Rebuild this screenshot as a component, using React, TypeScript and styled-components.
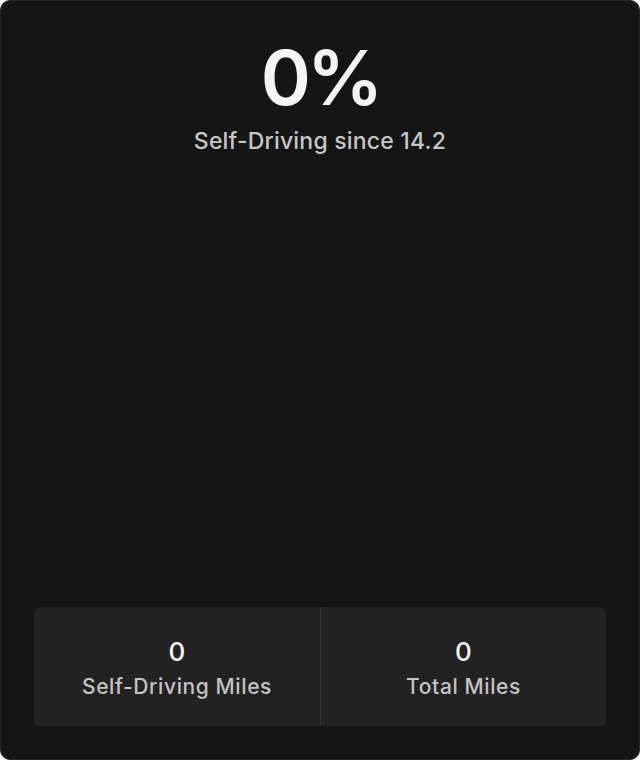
import React from "react";
import styled, { createGlobalStyle } from "styled-components";

const stats = [
  { value: "0", label: "Self-Driving Miles" },
  { value: "0", label: "Total Miles" },
];

const App: React.FC = () => {
  return (
    <Card>
      <GlobalStyle />
      <Header>
        <Percent>0%</Percent>
        <Subtitle>Self-Driving since 14.2</Subtitle>
      </Header>
      <StatsPanel>
        {stats.map((s, i) => (
          <Stat key={s.label} $divider={i > 0}>
            <StatValue>{s.value}</StatValue>
            <StatLabel>{s.label}</StatLabel>
          </Stat>
        ))}
      </StatsPanel>
    </Card>
  );
};

const GlobalStyle = createGlobalStyle`
  html, body {
    margin: 0;
    padding: 0;
    background: #ffffff;
  }
  body {
    font-family: Inter, "Noto Sans", sans-serif;
    -webkit-font-smoothing: antialiased;
  }
`;

const Card = styled.div`
  box-sizing: border-box;
  width: 640px;
  height: 760px;
  background: #151515;
  border: 1px solid #262626;
  border-radius: 10px;
  display: flex;
  flex-direction: column;
  justify-content: space-between;
  padding: 34px 33px 33px;
`;

const Header = styled.div`
  display: flex;
  flex-direction: column;
  align-items: center;
`;

const Percent = styled.div`
  font-size: 76px;
  font-weight: 600;
  line-height: 1;
  color: #f4f4f4;
  letter-spacing: -4px;
  margin-top: 4px;
`;

const Subtitle = styled.div`
  margin-top: 12px;
  font-size: 23px;
  font-weight: 500;
  letter-spacing: 0.2px;
  color: #c6c6c6;
`;

const StatsPanel = styled.div`
  display: grid;
  grid-template-columns: 1fr 1fr;
  height: 119px;
  background: #222222;
  border-radius: 6px;
`;

const Stat = styled.div<{ $divider?: boolean }>`
  display: flex;
  flex-direction: column;
  align-items: center;
  justify-content: center;
  gap: 9px;
  padding-top: 5px;
  border-left: ${(p) => (p.$divider ? "1px solid #363636" : "none")};
`;

const StatValue = styled.div`
  font-size: 26px;
  font-weight: 500;
  line-height: 1;
  color: #f5f5f5;
`;

const StatLabel = styled.div`
  font-size: 21px;
  font-weight: 500;
  line-height: 1.2;
  letter-spacing: 0.6px;
  color: #c4c4c4;
`;

export default App;
